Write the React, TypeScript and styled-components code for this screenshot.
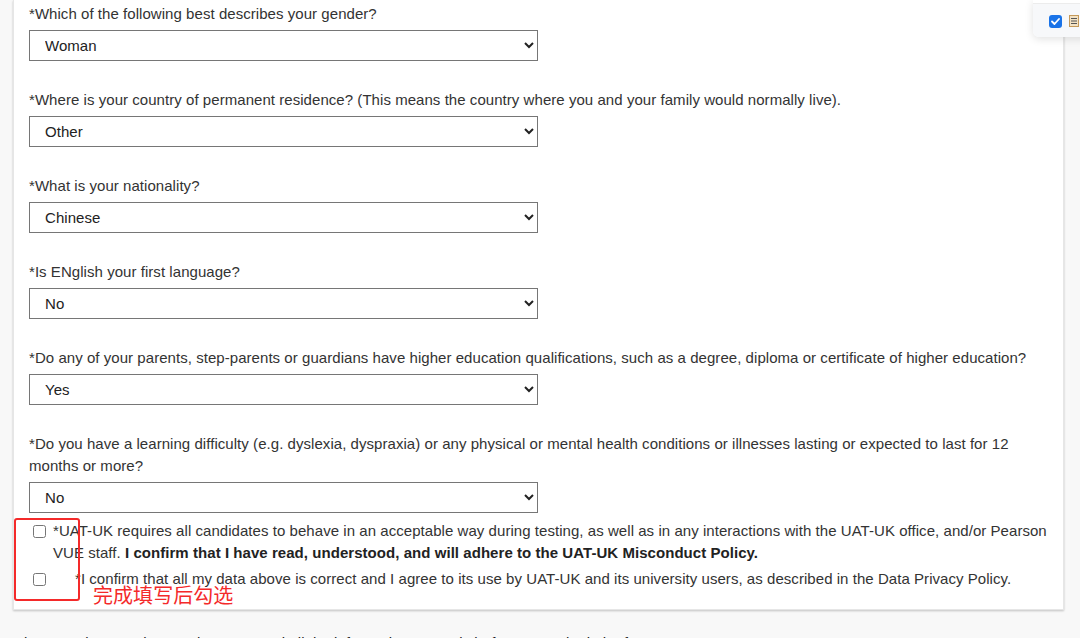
import React from 'react';
import styled, {createGlobalStyle} from 'styled-components';

const GlobalStyle = createGlobalStyle`
    html, body {
        margin: 0;
        padding: 0;
        background: #f8f8f8;
        font-family: "Liberation Sans", Arial, sans-serif;
        color: #333;
        overflow: hidden;
    }
`;

type Question = {
    label: string;
    value: string;
};

const questions: Question[] = [
    {label: '*Which of the following best describes your gender?', value: 'Woman'},
    {label: '*Where is your country of permanent residence? (This means the country where you and your family would normally live).', value: 'Other'},
    {label: '*What is your nationality?', value: 'Chinese'},
    {label: '*Is ENglish your first language?', value: 'No'},
    {label: '*Do any of your parents, step-parents or guardians have higher education qualifications, such as a degree, diploma or certificate of higher education?', value: 'Yes'},
    {label: '*Do you have a learning difficulty (e.g. dyslexia, dyspraxia) or any physical or mental health conditions or illnesses lasting or expected to last for 12 months or more?', value: 'No'},
];

export default function App() {
    return (
        <Page>
            <GlobalStyle/>
            <Card>
                {questions.map((q, i) => (
                    <Field key={i}>
                        <Label>{q.label}</Label>
                        <Select defaultValue={q.value}>
                            <option>{q.value}</option>
                        </Select>
                    </Field>
                ))}
                <Checks>
                    <CheckRow>
                        <Box type="checkbox"/>
                        <CheckText>
                            *UAT-UK requires all candidates to behave in an acceptable way during testing, as well as in any interactions with the UAT-UK office, and/or Pearson VUE staff. <b>I confirm that I have read, understood, and will adhere to the UAT-UK Misconduct Policy.</b>
                        </CheckText>
                    </CheckRow>
                    <CheckRow>
                        <Box type="checkbox"/>
                        <CheckText $indent>
                            *I confirm that all my data above is correct and I agree to its use by UAT-UK and its university users, as described in the Data Privacy Policy.
                        </CheckText>
                    </CheckRow>
                </Checks>
                <Marker/>
                <Note>完成填写后勾选</Note>
            </Card>
            <Footer>Please make sure that you have entered all the information correctly before you submit the form.</Footer>
            <Popup>
                <PopupBar>
                    <BlueCheck>
                        <svg width="9" height="7" viewBox="0 0 9 7">
                            <path d="M1 3.5 L3.5 6 L8 1" fill="none" stroke="#fff" strokeWidth="1.8" strokeLinecap="round" strokeLinejoin="round"/>
                        </svg>
                    </BlueCheck>
                    <svg width="10" height="12" viewBox="0 0 10 12">
                        <rect x="0.5" y="0.5" width="9" height="11" fill="#f3e2c4" stroke="#c59a5a"/>
                        <path d="M2 3.5h6M2 6h6M2 8.5h6" stroke="#555" strokeWidth="1"/>
                    </svg>
                </PopupBar>
            </Popup>
        </Page>
    );
}

const Page = styled.div`
    position: relative;
    height: 638px;
    padding-left: 13px;
    letter-spacing: 0.05px;
`;

const Card = styled.div`
    position: relative;
    width: 1051px;
    background: #fff;
    border: 1px solid #e6e6e6;
    border-top: none;
    box-shadow: 0 1px 2px rgba(0, 0, 0, 0.22);
    padding: 3px 0 19px 15px;
    box-sizing: border-box;
`;

const Field = styled.div`
    display: flex;
    flex-direction: column;
    align-items: flex-start;
    gap: 5px;
    margin-bottom: 28px;

    &:nth-child(6) {
        margin-bottom: 7px;
    }
`;

const Label = styled.label`
    font-size: 15px;
    line-height: 22px;
    color: #333;
    padding-right: 14px;
`;

const Select = styled.select`
    width: 509px;
    height: 31px;
    border: 1px solid #767676;
    border-radius: 0;
    background: #fff;
    font-family: "Liberation Sans", Arial, sans-serif;
    font-size: 15px;
    letter-spacing: 0.05px;
    color: #222;
    padding: 0 10px 1px 11px;
    margin: 0;
`;

const Checks = styled.div`
    display: flex;
    flex-direction: column;
    gap: 4px;
`;

const CheckRow = styled.div`
    display: flex;
    align-items: flex-start;
    gap: 7px;
`;

const Box = styled.input`
    width: 13px;
    height: 13px;
    margin: 5px 0 0 4px;
    flex: none;
`;

const CheckText = styled.span<{ $indent?: boolean }>`
    font-size: 15px;
    line-height: 22px;
    color: #333;
    padding-left: ${p => (p.$indent ? '22px' : '0')};
    padding-right: 10px;

    b {
        color: #222;
    }
`;

const Marker = styled.div`
    position: absolute;
    left: 0;
    bottom: 8px;
    width: 66px;
    height: 83px;
    border: 2px solid #f42a2a;
    border-radius: 3px;
    box-sizing: border-box;
`;

const Note = styled.div`
    position: absolute;
    left: 79px;
    bottom: 1px;
    font-family: "Noto Sans CJK SC", sans-serif;
    font-size: 20px;
    line-height: 26px;
    color: #f42a2a;
`;

const Footer = styled.p`
    margin: 22px 0 0 1px;
    font-size: 15px;
    line-height: 22px;
    color: #222;
    white-space: nowrap;
`;

const Popup = styled.div`
    position: absolute;
    top: 0;
    left: 1033px;
    width: 60px;
    height: 37px;
    background: #fff;
    border-bottom-left-radius: 6px;
    box-shadow: 0 2px 8px rgba(0, 0, 0, 0.12);
    overflow: hidden;
`;

const PopupBar = styled.div`
    margin-top: 3px;
    height: 34px;
    border-top: 1px solid #ececec;
    background: #f7f8fa;
    display: flex;
    align-items: center;
    gap: 7px;
    padding-left: 16px;
`;

const BlueCheck = styled.span`
    width: 13px;
    height: 13px;
    border-radius: 3px;
    background: #1a73e8;
    display: flex;
    align-items: center;
    justify-content: center;
`;
